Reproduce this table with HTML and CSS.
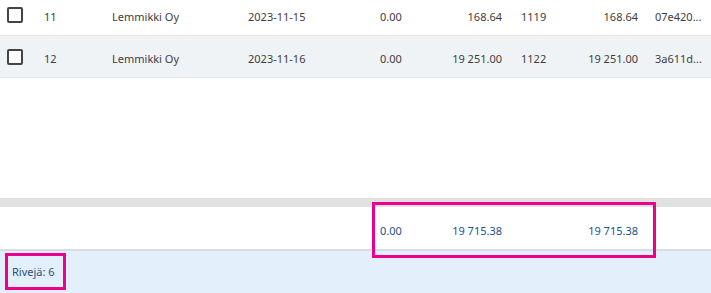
FILE: index.html
```html
<!DOCTYPE html>
<html lang="fi">
<head>
<meta charset="utf-8">
<link rel="stylesheet" href="styles.css">
</head>
<body>
<div class="page">
  <div class="grid-body">
    <div class="row">
      <div class="cell c-check"><span class="checkbox"></span></div>
      <div class="cell c-id">11</div>
      <div class="cell c-name">Lemmikki Oy</div>
      <div class="cell c-date">2023-11-15</div>
      <div class="cell c-a">0.00</div>
      <div class="cell c-b num">168.64</div>
      <div class="cell c-c">1119</div>
      <div class="cell c-d num">168.64</div>
      <div class="cell c-e">07e420...</div>
    </div>
    <div class="row alt">
      <div class="cell c-check"><span class="checkbox"></span></div>
      <div class="cell c-id">12</div>
      <div class="cell c-name">Lemmikki Oy</div>
      <div class="cell c-date">2023-11-16</div>
      <div class="cell c-a">0.00</div>
      <div class="cell c-b num">19 251.00</div>
      <div class="cell c-c">1122</div>
      <div class="cell c-d num">19 251.00</div>
      <div class="cell c-e">3a611d...</div>
    </div>
  </div>
  <div class="scrolltrack"></div>
  <div class="row totals">
    <div class="cell c-check"></div>
    <div class="cell c-id"></div>
    <div class="cell c-name"></div>
    <div class="cell c-date"></div>
    <div class="cell c-a">0.00</div>
    <div class="cell c-b num">19 715.38</div>
    <div class="cell c-c"></div>
    <div class="cell c-d num">19 715.38</div>
    <div class="cell c-e"></div>
  </div>
  <div class="statusbar">
    <span class="count">Rivejä: 6</span>
  </div>
  <div class="highlight hl-totals"></div>
  <div class="highlight hl-count"></div>
</div>
</body>
</html>
```
FILE: styles.css
```css
* { box-sizing: border-box; }
html, body { margin: 0; padding: 0; }
body {
  font-family: "Noto Sans", "Open Sans", sans-serif;
  font-size: 11px;
  color: #3d3d3d;
  background: #ffffff;
  overflow: hidden;
}
.page {
  position: relative;
  width: 711px;
  height: 293px;
  overflow: hidden;
}
.grid-body {
  height: 198px;
  margin-top: -6px;
  height: 204px;
}
.row {
  display: grid;
  grid-template-columns: 44px 68px 136px 132px 50px 72px 60px 76px 73px;
  height: 42px;
  align-items: center;
  border-bottom: 1px solid #e5e8eb;
  background: #ffffff;
}
.row.alt { background: #f0f3f6; }
.cell {
  white-space: nowrap;
  overflow: hidden;
  padding-top: 4px;
}
.c-check { padding-left: 7px; padding-top: 0; display: flex; align-items: center; }
.checkbox {
  display: block;
  width: 16px;
  height: 16px;
  border: 2px solid #444444;
  border-radius: 2px;
  background: #ffffff;
}
.num { text-align: right; }
.c-c { padding-left: 19px; }
.c-e { padding-left: 17px; }
.scrolltrack {
  height: 9px;
  background: #e1e1e1;
}
.row.totals {
  height: 44px;
  border-bottom: 2px solid #d6dde4;
  color: #1b5288;
}
.statusbar {
  height: 42px;
  background: #e3f0fc;
  display: flex;
  align-items: center;
  padding-left: 12px;
  padding-bottom: 2px;
}
.count { color: #2a4f74; }
.highlight {
  position: absolute;
  border: 3px solid #ec008c;
}
.hl-totals { left: 372px; top: 202px; width: 284px; height: 56px; }
.hl-count { left: 5px; top: 253px; width: 61px; height: 37px; }
```
